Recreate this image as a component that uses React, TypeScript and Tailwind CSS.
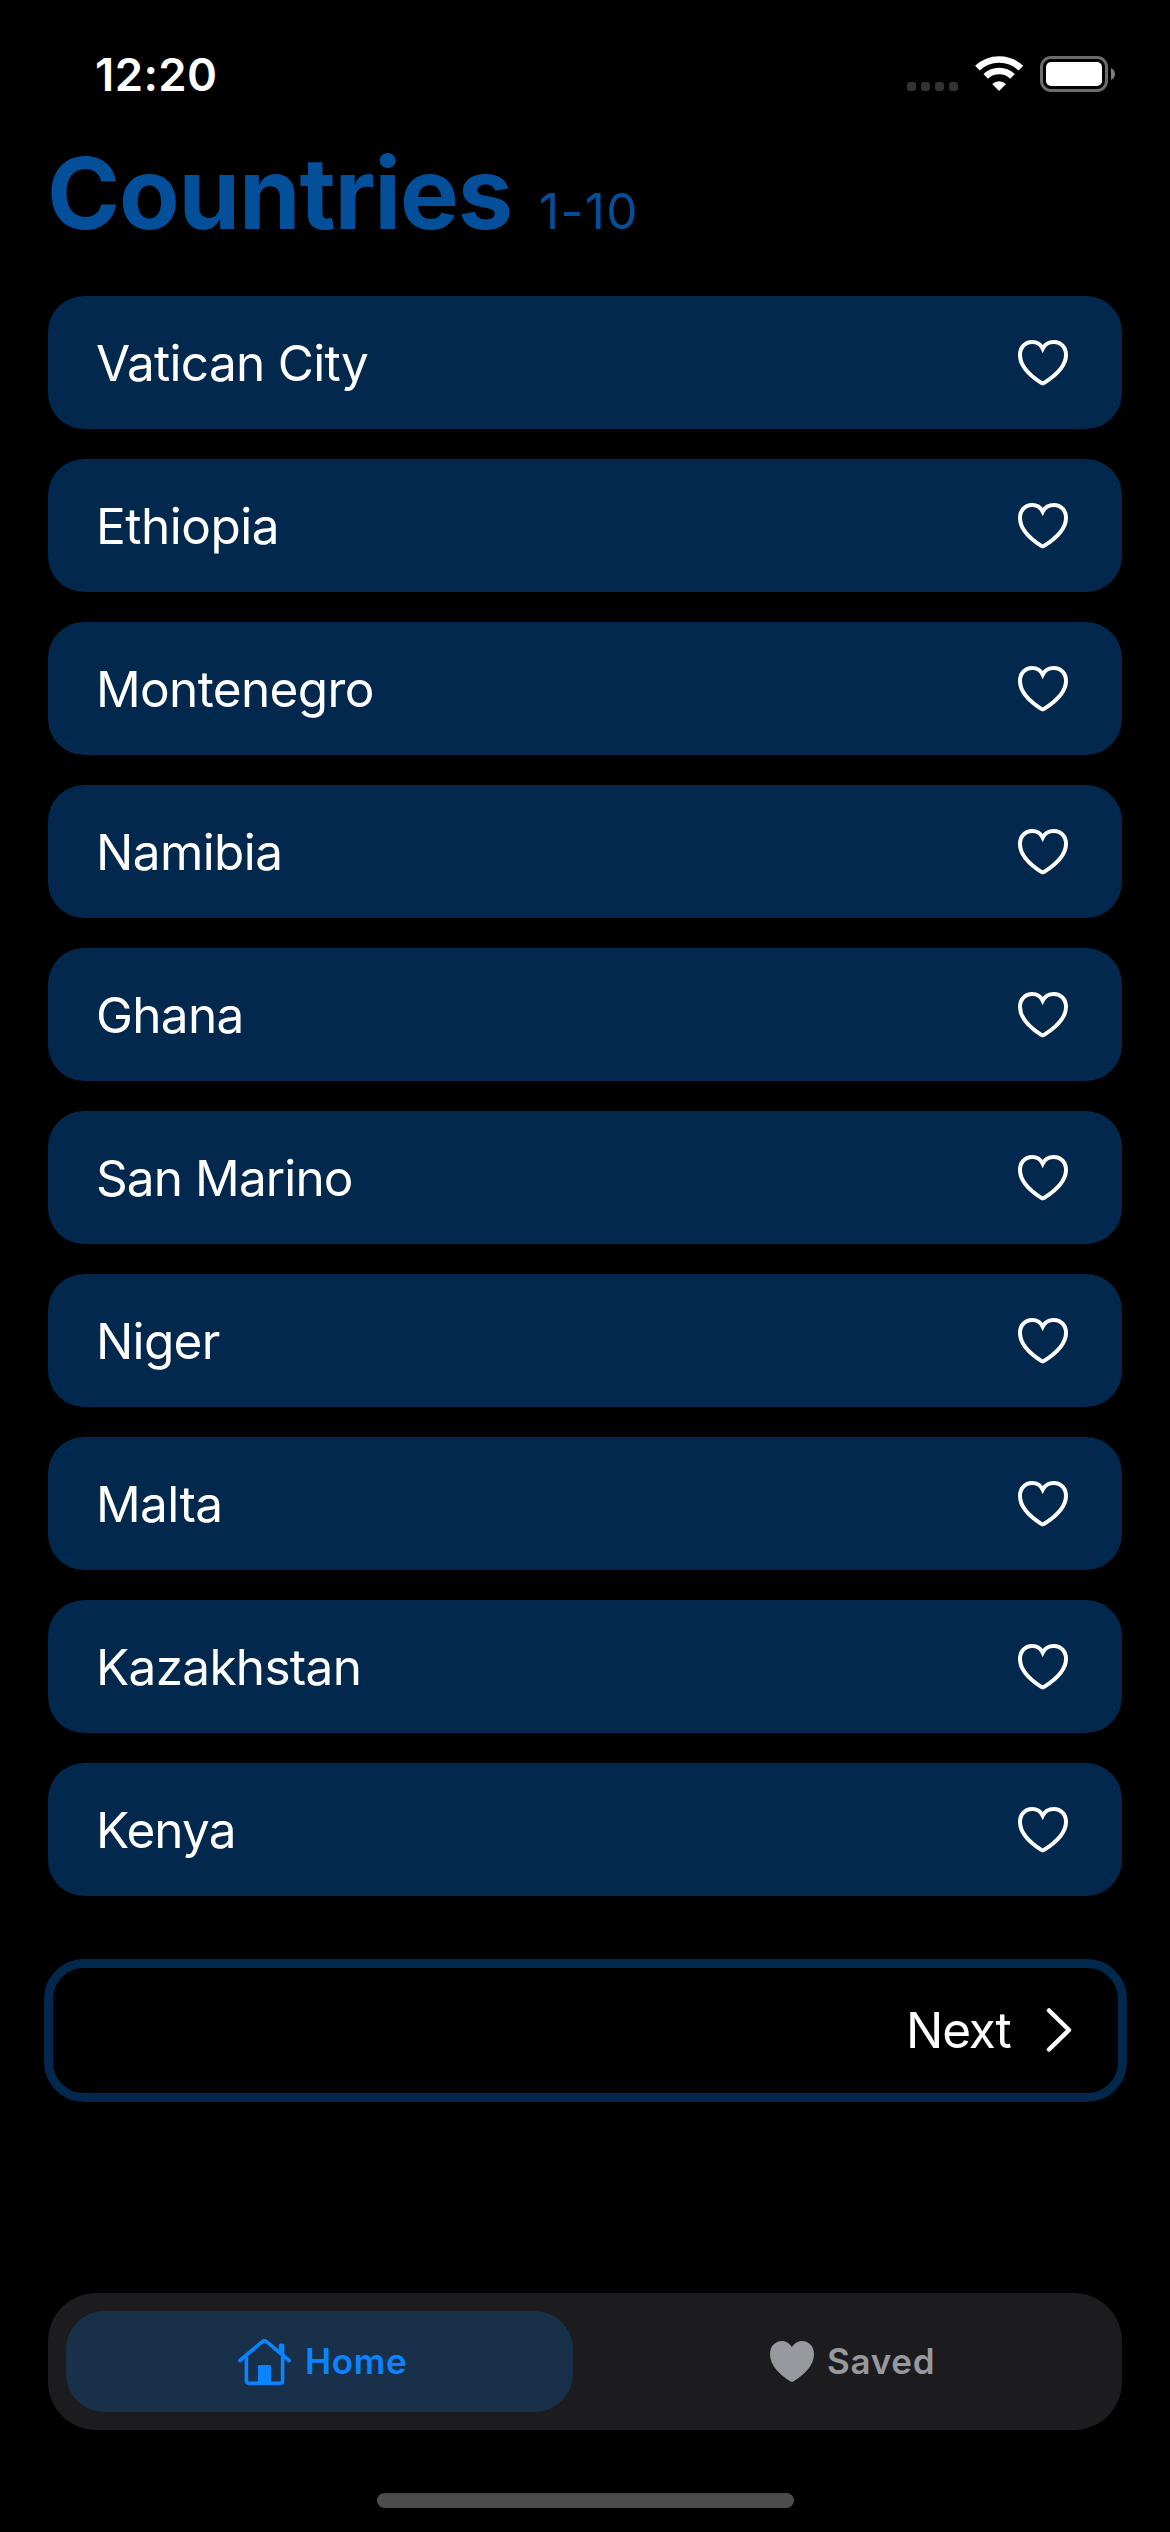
const countries = [
  { name: 'Vatican City', tracking: 'tracking-[-0.7px]' },
  { name: 'Ethiopia', tracking: 'tracking-[-0.5px]' },
  { name: 'Montenegro', tracking: 'tracking-[-0.650px]' },
  { name: 'Namibia', tracking: 'tracking-[-0.6px]' },
  { name: 'Ghana', tracking: 'tracking-[-0.7px]' },
  { name: 'San Marino', tracking: 'tracking-[-0.9px]' },
  { name: 'Niger', tracking: 'tracking-[-0.7px]' },
  { name: 'Malta', tracking: 'tracking-[-0.6px]' },
  { name: 'Kazakhstan', tracking: 'tracking-[-0.7px]' },
  { name: 'Kenya', tracking: 'tracking-[-0.9px]' },
];

function HeartOutline() {
  return (
    <svg className="h-[46px] w-[50px]" viewBox="0 0 50 46" fill="none" stroke="white" strokeWidth="4">
      <path d="M24.700 8.600C22.600 4.200 18.600 2 14.200 2C7 2 2 7.500 2 15C2 25.500 11 35 23.300 42.900Q24.700 43.800 26.100 42.900C38.500 35 48 25.500 48 15C48 7.500 43 2 35.800 2C31.200 2 26.900 4.200 24.700 8.600Z" />
    </svg>
  );
}

function HeartSolid() {
  return (
    <svg className="h-[41px] w-[44px]" viewBox="0 0 44 41" fill="#98989f">
      <path d="M21.800 6.200C19.800 2.500 16 0 12 0C5 0 0 5.500 0 13C0 24 9 33.500 20.500 40.400Q21.900 41.200 23.300 40.400C35 33.500 44 24 44 13C44 5.500 39 0 32 0C28 0 24 2.500 21.800 6.200Z" />
    </svg>
  );
}

function House() {
  return (
    <svg className="h-[46px] w-[53px]" viewBox="0 0 53 46" fill="none" stroke="#0a84ff" strokeLinecap="round" strokeLinejoin="round">
      <path d="M1.900 21.500L24.500 2.600Q26.500 1 28.500 2.600L51.100 21.500" strokeWidth="3.700" />
      <path d="M8.400 17V41.500Q8.400 44.200 11 44.200H42Q44.600 44.200 44.600 41.500V17" strokeWidth="3.600" />
      <path d="M40.800 14V6.500Q40.800 4.500 42.800 4.500H44.500Q46.400 4.500 46.400 6.500V18Z" fill="#0a84ff" stroke="none" />
      <path d="M20 44V27.500Q20 26 21.500 26H31.500Q33 26 33 27.500V44Z" fill="#0a84ff" stroke="none" />
    </svg>
  );
}

function StatusBar() {
  return (
    <header className="flex h-[147px] items-start justify-between pr-[54px] pl-[95px]">
      <time className="mt-[48px] text-[45.500px] leading-[54px] font-semibold tracking-[0.4px]">12:20</time>
      <div className="mt-[55px] flex h-[37px]">
        <svg className="mt-[27px] h-[9px] w-[51px]" viewBox="0 0 51 9" fill="#333333">
          <rect width="9" height="9" rx="3" />
          <rect x="14" width="9" height="9" rx="3" />
          <rect x="28" width="9" height="9" rx="3" />
          <rect x="42" width="9" height="9" rx="3" />
        </svg>
        <svg className="ml-[17px] h-[36px] w-[48px]" viewBox="0 0 48 36" fill="none" stroke="white">
          <path d="M2.400 13.200A31.500 31.500 0 0 1 45.800 13.200" strokeWidth="6.600" />
          <path d="M10.700 21.400A19.500 19.500 0 0 1 37.500 21.400" strokeWidth="6.600" />
          <path d="M24.100 36L17.200 29A10 10 0 0 1 31 29Z" fill="white" stroke="none" />
        </svg>
        <svg className="ml-[17px] h-[37px] w-[76px]" viewBox="0 0 76 37">
          <rect x="1.500" y="2.500" width="65" height="33" rx="9.500" fill="none" stroke="#6c6c6c" strokeWidth="3" />
          <rect x="6" y="7" width="56" height="24" rx="5" fill="white" />
          <path d="M71 13C76.300 15.500 76.300 22.500 71 25Z" fill="#808080" />
        </svg>
      </div>
    </header>
  );
}

export default function App() {
  return (
    <div className="flex h-[2532px] w-[1170px] flex-col overflow-hidden bg-black font-['Inter',sans-serif] text-white">
      <StatusBar />
      <div className="flex h-[149px] items-baseline pl-[47px] text-[#044f99]">
        <h1 className="text-[99px] leading-[92px] font-bold tracking-[-1.200px]">Countries</h1>
        <span className="ml-[27px] text-[49.500px] tracking-[1.400px]">1-10</span>
      </div>
      <ul className="mx-[48px] flex flex-col gap-[30px]">
        {countries.map((c) => (
          <li key={c.name} className="flex h-[133px] items-center justify-between rounded-[36px] bg-[#02284d] pr-[54px] pl-[48px]">
            <span className={`text-[49.500px] leading-[60px] ${c.tracking}`}>{c.name}</span>
            <HeartOutline />
          </li>
        ))}
      </ul>
      <button className="mx-[43.500px] mt-[63px] flex h-[142.500px] items-center justify-end rounded-[40px] border-[9px] border-[#02284d] pr-[46px]">
        <span className="text-[49.500px] leading-[60px] tracking-[-1.200px]">Next</span>
        <svg className="ml-[35px] h-[44px] w-[26px]" viewBox="0 0 26 44" fill="none" stroke="white" strokeWidth="4.500" strokeLinecap="round" strokeLinejoin="round">
          <path d="M3 2.500L23 22L3 41.500" />
        </svg>
      </button>
      <nav className="mx-[48px] mt-[191.500px] flex h-[137px] items-center rounded-[48px] bg-[#1c1c1e] px-[18px] text-[35px] font-semibold">
        <a className="flex h-[101px] w-[507px] items-center rounded-[38px] bg-[#183049] pl-[171.500px] text-[#0a84ff]">
          <House />
          <span className="ml-[14.500px] tracking-[0.700px]">Home</span>
        </a>
        <a className="flex h-[101px] flex-1 items-center pl-[197px] text-[#98989f]">
          <HeartSolid />
          <span className="ml-[13px] tracking-[0.700px]">Saved</span>
        </a>
      </nav>
      <div className="mt-[63px] ml-[377px] h-[15px] w-[417px] rounded-full bg-[#4c4c4c]" />
    </div>
  );
}
